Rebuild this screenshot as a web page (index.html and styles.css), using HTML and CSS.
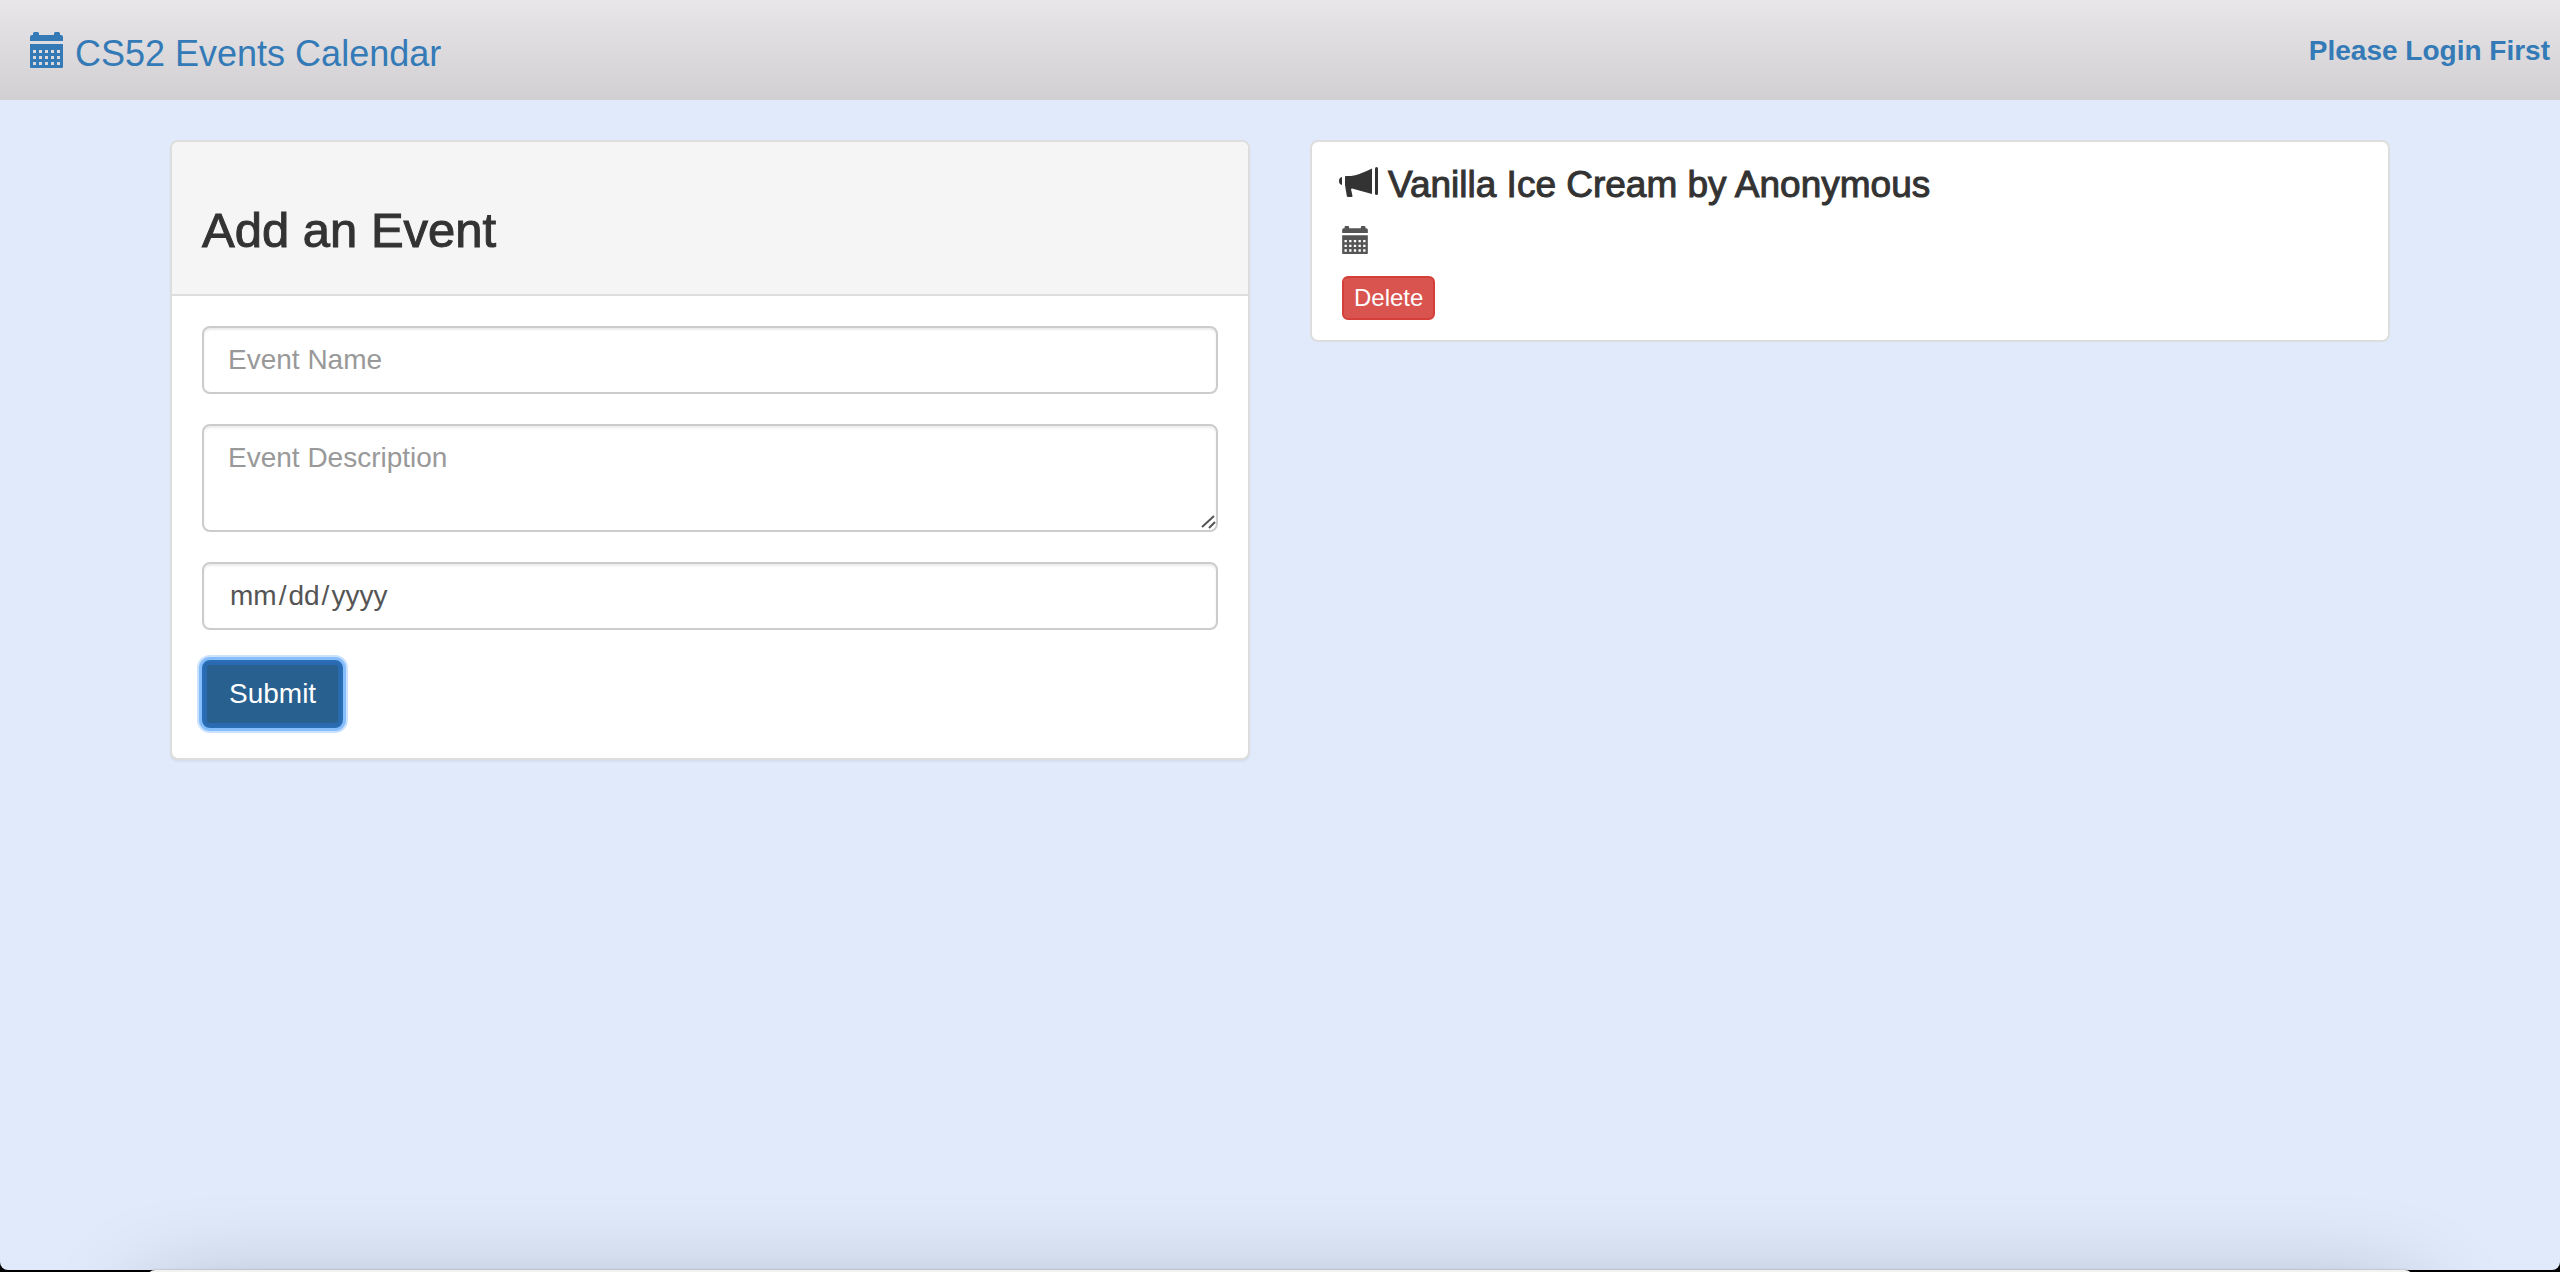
FILE: index.html
```html
<!DOCTYPE html>
<html lang="en">
<head>
<meta charset="utf-8">
<title>CS52 Events Calendar</title>
<link rel="stylesheet" href="styles.css">
</head>
<body>
<svg class="sprite" aria-hidden="true">
  <symbol id="calendar" viewBox="0 0 33 36">
    <path fill-rule="evenodd" d="M0 9V5Q0 3 2 3H3V1.500Q3 0 4.500 0H7.500Q9 0 9 1.500V3H24V1.500Q24 0 25.500 0H28.500Q30 0 30 1.500V3H31Q33 3 33 5V9ZM0 12H33V35Q33 36 32 36H1Q0 36 0 35ZM3 18v3h3v-3zM9 18v3h3v-3zM15 18v3h3v-3zM21 18v3h3v-3zM27 18v3h3v-3zM3 24v3h3v-3zM9 24v3h3v-3zM15 24v3h3v-3zM21 24v3h3v-3zM27 24v3h3v-3zM3 30v3h3v-3zM9 30v3h3v-3zM15 30v3h3v-3zM21 30v3h3v-3zM27 30v3h3v-3z"/>
  </symbol>
</svg>
<div class="page">
  <header class="navbar">
    <a class="brand" href="#"><svg class="brand-icon" aria-hidden="true"><use href="#calendar"/></svg><span>CS52 Events Calendar</span></a>
    <a class="login" href="#">Please Login First</a>
  </header>
  <main class="columns">
    <section class="panel form-panel">
      <div class="panel-heading"><h2>Add an Event</h2></div>
      <form class="panel-body">
        <input class="field" type="text" placeholder="Event Name" aria-label="Event Name">
        <textarea class="field field-area" placeholder="Event Description" aria-label="Event Description"></textarea>
        <input class="field" type="date" aria-label="Event Date">
        <button class="submit" type="button">Submit</button>
      </form>
    </section>
    <article class="panel event">
      <h3><svg class="horn" viewBox="3 0 36 30" aria-hidden="true"><path d="M3 10V18Q0 17.500 0 14Q0 10.500 3 10ZM6 10Q6 9 7 9H12Q20 8 33 1.500V27L13 21.500L12 22L13.500 29Q13.500 30 12.500 30H9Q8 30 7.800 29L6 18Z"/><rect x="36" y="0" width="3" height="28" rx="1.500"/></svg><span>Vanilla Ice Cream by Anonymous</span></h3>
      <div class="event-date"><svg aria-hidden="true"><use href="#calendar"/></svg></div>
      <button class="delete" type="button">Delete</button>
    </article>
  </main>
</div>
<div class="sheet"></div>
</body>
</html>
```
FILE: styles.css
```css
* {
  box-sizing: border-box;
}

html {
  background: #000;
}

body {
  margin: 0;
  color: #333;
  font: 28px/40px "Liberation Sans", Arial, sans-serif;
}

.sprite {
  display: none;
}

svg {
  display: block;
  flex: none;
  fill: currentColor;
}

.page {
  min-height: calc(100vh - 2px);
  background: #e0eafb;
  border-radius: 0 0 8px 8px;
}

.navbar {
  display: flex;
  justify-content: space-between;
  align-items: flex-start;
  padding: 32px 10px 24px 30px;
  background: linear-gradient(#e8e6e9, #d1cfd1);
}

.navbar a {
  color: #337ab7;
  text-decoration: none;
}

.brand {
  display: flex;
  gap: 12px;
  font-size: 36px;
  line-height: 44px;
}

.brand-icon {
  width: 33px;
  height: 36px;
}

.navbar .login {
  font-weight: bold;
  line-height: 38px;
}

.columns {
  display: grid;
  grid-template-columns: 1fr 1fr;
  align-items: start;
  gap: 60px;
  max-width: 2340px;
  margin: 0 auto;
  padding: 40px 60px;
}

.panel {
  background: #fff;
  border: 2px solid #ddd;
  border-radius: 8px;
}

.form-panel {
  box-shadow: 0 2px 2px rgba(0, 0, 0, 0.05);
}

.panel-heading {
  padding: 62px 30px 38px;
  background: #f5f5f5;
  border-bottom: 2px solid #ddd;
  border-radius: 6px 6px 0 0;
}

h2,
h3 {
  margin: 0;
  font-weight: 500;
  -webkit-text-stroke: 1px currentColor;
}

h2 {
  font-size: 49px;
  line-height: 52px;
}

.panel-body {
  display: flex;
  flex-direction: column;
  align-items: flex-start;
  gap: 30px;
  padding: 30px;
}

.field {
  display: block;
  width: 100%;
  height: 68px;
  margin: 0;
  padding: 12px 24px;
  color: #555;
  background: #fff;
  border: 2px solid #ccc;
  border-radius: 8px;
  box-shadow: inset 0 2px 2px rgba(0, 0, 0, 0.075);
  font: inherit;
}

.field-area {
  height: 108px;
  resize: vertical;
}

.field-area::-webkit-resizer {
  background: url("data:image/svg+xml,%3Csvg xmlns='http://www.w3.org/2000/svg' width='15' height='15'%3E%3Cpath d='M1 12L13 1M8 13L14 7' stroke='%23555' stroke-width='2' fill='none'/%3E%3C/svg%3E") no-repeat;
}

.field::placeholder {
  color: #999;
}

.field::-webkit-calendar-picker-indicator {
  display: none;
}

.field::-webkit-datetime-edit-month-field,
.field::-webkit-datetime-edit-day-field,
.field::-webkit-datetime-edit-year-field {
  padding: 0 2px;
}

.submit {
  padding: 12px 25px;
  color: #fff;
  background: #286090;
  border: 2px solid #2a6fb5;
  border-radius: 8px;
  box-shadow: inset 0 0 0 3px #2a6ab0, 0 0 0 3px #86bdfd, 0 0 0 5px #cbe2fd;
  font: inherit;
}

.event {
  padding: 20px 30px;
}

.event h3 {
  display: flex;
  gap: 10px;
  font-size: 37px;
  line-height: 46px;
}

.horn {
  width: 36px;
  height: 40px;
  padding: 5px 0;
  overflow: visible;
  stroke: none;
}

.event-date {
  height: 30px;
  margin: 18px 0 20px;
  color: #555;
}

.event-date svg {
  width: 26px;
  height: 28px;
}

.delete {
  display: block;
  padding: 2px 10px;
  color: #fff;
  background: #d9534f;
  border: 2px solid #d43f3a;
  border-radius: 6px;
  font: 24px/36px "Liberation Sans", Arial, sans-serif;
}

.sheet {
  position: fixed;
  top: calc(100vh - 2px);
  left: 147px;
  right: 147px;
  height: 400px;
  background: #f4f1f1;
  border-radius: 8px 8px 0 0;
  box-shadow: 0 30px 100px rgba(0, 0, 0, 0.3), 0 0 2px rgba(0, 0, 0, 0.3);
}
```
